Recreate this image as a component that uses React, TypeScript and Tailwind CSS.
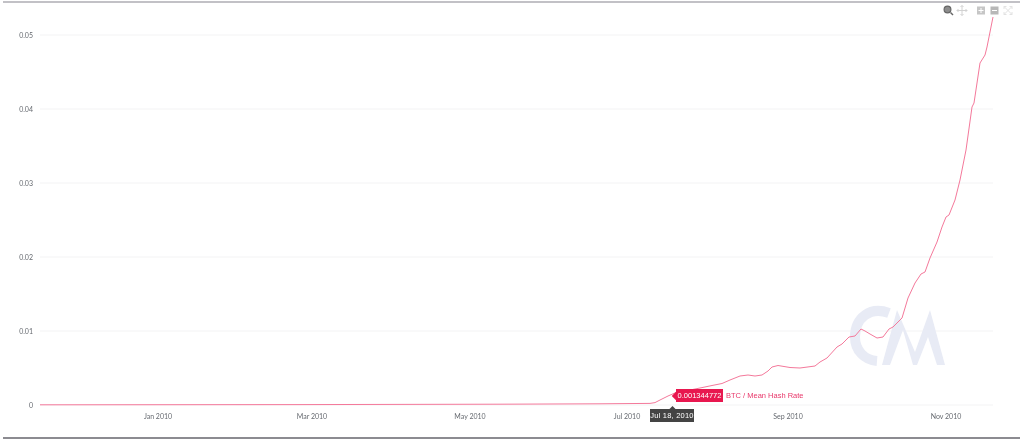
const yTicks = [
  { label: "0.05", y: 35 },
  { label: "0.04", y: 109 },
  { label: "0.03", y: 183 },
  { label: "0.02", y: 257 },
  { label: "0.01", y: 331 },
  { label: "0", y: 405 },
];

const xTicks = [
  { label: "Jan 2010", x: 158 },
  { label: "Mar 2010", x: 312 },
  { label: "May 2010", x: 470 },
  { label: "Jul 2010", x: 627 },
  { label: "Sep 2010", x: 788 },
  { label: "Nov 2010", x: 946 },
];

const points = [
  [40, 404.8], [300, 404.6], [500, 404.2], [600, 403.8], [650, 403.4], [655, 402.6], [660, 400], [668, 396],
  [676, 392.5], [690, 390], [700, 388], [712, 385.5], [722, 383.5], [730, 380], [740, 376], [748, 375],
  [755, 376], [762, 375], [768, 371], [772, 367], [778, 365.5], [790, 367.5], [800, 368], [815, 366],
  [820, 362], [827, 358], [837, 347], [842, 344], [849, 337], [855, 336], [861, 329], [865, 331],
  [870, 334], [877, 338], [883, 337], [889, 329], [893, 327], [902, 318], [908, 298], [915, 283],
  [921, 274], [925, 272], [930, 258], [937, 242], [942, 227], [946, 217], [949, 215], [955, 200],
  [960, 180], [966, 150], [972, 107], [974, 103], [980, 63], [985, 55], [987, 47], [993, 17],
];

function ChartSvg() {
  return (
    <svg viewBox="0 3 1024 434" className="block h-full w-full">
      {yTicks.map((t) => (
        <g key={t.label}>
          <line x1={40} x2={993} y1={t.y} y2={t.y} stroke="#f3f3f4" strokeWidth={1} />
          <text x={33} y={t.y + 2.5} textAnchor="end" fontSize={7} fill="#666a70" fontFamily="Lato, sans-serif">
            {t.label}
          </text>
        </g>
      ))}
      {xTicks.map((t) => (
        <text key={t.label} x={t.x} y={418.5} textAnchor="middle" fontSize={7} fill="#666a70" fontFamily="Lato, sans-serif">
          {t.label}
        </text>
      ))}

      {/* CM watermark */}
      <path d="M889 313 C 870 306 855 318 855 337 C 855 350 864 360 877 361" fill="none" stroke="#e8ebf5" strokeWidth={10} />
      <path d="M882 365 L 897 310 L 915 352 L 930 310 L 945 365 L 937 365 L 928 337 L 917 365 L 913 365 L 903 330 L 890 365 Z" fill="#e8ebf5" />

      <polyline points={points.map((p) => p.join(",")).join(" ")} fill="none" stroke="#f4799b" strokeWidth={1} strokeLinejoin="round" />

      {/* toolbox */}
      <circle cx={947.5} cy={9.5} r={3.4} fill="#8d8d8d" stroke="#666666" strokeWidth={1.2} />
      <line x1={950.5} y1={12.5} x2={953} y2={15} stroke="#666666" strokeWidth={1.4} />
      <path d="M962 5.5V15.5M957 10.5H967M960.5 7L962 5.5L963.5 7M960.5 14L962 15.5L963.5 14M958.5 9L957 10.5L958.5 12M965.5 9L967 10.5L965.5 12" fill="none" stroke="#d2d2d2" strokeWidth={1} />
      <rect x={977} y={6.5} width={8} height={8} fill="#c6c6c6" />
      <path d="M978.5 10.5H983.5M981 8V13" stroke="#fff" strokeWidth={1} />
      <rect x={990.5} y={6.5} width={8} height={8} fill="#b8b8b8" />
      <path d="M992 10.5H997" stroke="#fff" strokeWidth={1} />
      <path d="M1004 6.5L1012 14.5M1012 6.5L1004 14.5M1004 9V6.5H1006.5M1009.5 6.5H1012V9M1004 12V14.5H1006.5M1009.5 14.5H1012V12" fill="none" stroke="#e2e2e2" strokeWidth={1} />
    </svg>
  );
}

export default function App() {
  return (
    <div className="flex h-[440px] w-[1024px] flex-col overflow-hidden bg-white pt-px pb-px pl-[3px] pr-1 font-['Liberation_Sans',Arial,sans-serif] blur-[0.3px]">
      <div className="h-[2px] shrink-0 bg-[#c2c1c6]" />
      <div className="relative -ml-[3px] -mr-1 min-h-0 flex-1">
        <ChartSvg />

        {/* value tooltip */}
        <div className="absolute left-[676px] top-[386px] flex items-center">
          <span className="absolute -left-[3px] top-[3.5px] size-[6px] rotate-45 bg-[#e8174f]" />
          <span className="relative h-[13px] w-[47px] bg-[#e8174f] text-center text-[7.5px] leading-[13px] text-white">0.001344772</span>
          <span className="ml-[3px] text-[7.5px] leading-[13px] whitespace-nowrap text-[#e8376a]">BTC / Mean Hash Rate</span>
        </div>

        {/* date tooltip */}
        <div className="absolute left-[650px] top-[406px] h-[13px] w-[44px] bg-[#444444] text-center text-[7.5px] leading-[13px] tracking-[0.2px] text-white">
          <span className="absolute left-[20px] -top-[2px] size-[5px] rotate-45 bg-[#444444]" />
          <span className="relative">Jul 18, 2010</span>
        </div>
      </div>
      <div className="h-[2px] shrink-0 bg-[#8c8b91]" />
    </div>
  );
}
